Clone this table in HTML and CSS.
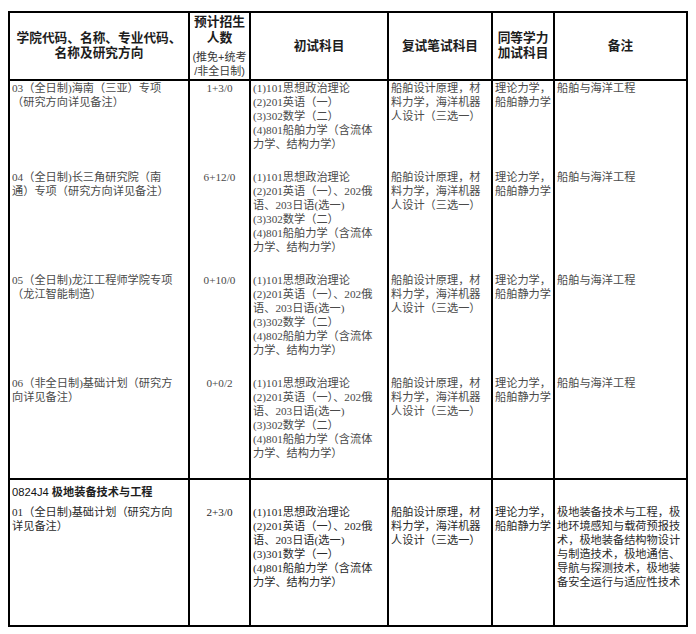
FILE: index.html
```html
<!DOCTYPE html>
<html lang="zh-CN">
<head>
<meta charset="utf-8">
<title>招生专业目录</title>
<link rel="stylesheet" href="styles.css">
</head>
<body>
<div class="tbl">
  <div class="c h"><div class="hl">学院代码、名称、专业代码、<br>名称及研究方向</div></div>
  <div class="c h h2"><div class="big">预计招生<br>人数</div><div class="small">(推免+统考<br>/非全日制)</div></div>
  <div class="c h"><div class="hl">初试科目</div></div>
  <div class="c h"><div class="hl">复试笔试科目</div></div>
  <div class="c h"><div class="hl">同等学力<br>加试科目</div></div>
  <div class="c h"><div class="hl">备注</div></div>

  <div class="c d">03（全日制)海南（三亚）专项<br>（研究方向详见备注）</div>
  <div class="c d n">1+3/0</div>
  <div class="c d">(1)101思想政治理论<br>(2)201英语（一）<br>(3)302数学（二）<br>(4)801船舶力学（含流体<br>力学、结构力学）</div>
  <div class="c d">船舶设计原理，材<br>料力学，海洋机器<br>人设计（三选一）</div>
  <div class="c d">理论力学，<br>船舶静力学</div>
  <div class="c d">船舶与海洋工程</div>

  <div class="c d">04（全日制)长三角研究院（南<br>通）专项（研究方向详见备注）</div>
  <div class="c d n">6+12/0</div>
  <div class="c d">(1)101思想政治理论<br>(2)201英语（一）、202俄<br>语、203日语(选一)<br>(3)302数学（二）<br>(4)801船舶力学（含流体<br>力学、结构力学）</div>
  <div class="c d">船舶设计原理，材<br>料力学，海洋机器<br>人设计（三选一）</div>
  <div class="c d">理论力学，<br>船舶静力学</div>
  <div class="c d">船舶与海洋工程</div>

  <div class="c d">05（全日制)龙江工程师学院专项<br>（龙江智能制造）</div>
  <div class="c d n">0+10/0</div>
  <div class="c d">(1)101思想政治理论<br>(2)201英语（一）、202俄<br>语、203日语(选一)<br>(3)302数学（二）<br>(4)802船舶力学（含流体<br>力学、结构力学）</div>
  <div class="c d">船舶设计原理，材<br>料力学，海洋机器<br>人设计（三选一）</div>
  <div class="c d">理论力学，<br>船舶静力学</div>
  <div class="c d">船舶与海洋工程</div>

  <div class="c d b">06（非全日制)基础计划（研究方<br>向详见备注）</div>
  <div class="c d n b">0+0/2</div>
  <div class="c d b">(1)101思想政治理论<br>(2)201英语（一）、202俄<br>语、203日语(选一)<br>(3)302数学（二）<br>(4)801船舶力学（含流体<br>力学、结构力学）</div>
  <div class="c d b">船舶设计原理，材<br>料力学，海洋机器<br>人设计（三选一）</div>
  <div class="c d b">理论力学，<br>船舶静力学</div>
  <div class="c d b">船舶与海洋工程</div>

  <div class="c major"><span class="code">0824J4</span> 极地装备技术与工程</div>
  <div class="c"></div>
  <div class="c"></div>
  <div class="c"></div>
  <div class="c"></div>
  <div class="c"></div>

  <div class="c d dk b">01（全日制)基础计划（研究方向<br>详见备注）</div>
  <div class="c d dk n b">2+3/0</div>
  <div class="c d dk b">(1)101思想政治理论<br>(2)201英语（一）、202俄<br>语、203日语(选一)<br>(3)301数学（一）<br>(4)801船舶力学（含流体<br>力学、结构力学）</div>
  <div class="c d dk b">船舶设计原理，材<br>料力学，海洋机器<br>人设计（三选一）</div>
  <div class="c d dk b">理论力学，<br>船舶静力学</div>
  <div class="c d dk b">极地装备技术与工程，极<br>地环境感知与载荷预报技<br>术，极地装备结构物设计<br>与制造技术，极地通信、<br>导航与探测技术，极地装<br>备安全运行与适应性技术</div>
</div>
</body>
</html>
```

FILE: styles.css
```css
html, body {
  margin: 0;
  padding: 0;
  background: #ffffff;
}

.tbl {
  display: grid;
  grid-template-columns: 180px 61px 138px 104px 62px 133px;
  grid-template-rows: 68px 89px 103px 103px 104px 25px 122px;
  width: max-content;
  margin: 11px 0 0 8px;
  border-left: 2px solid #000;
  border-top: 2px solid #000;
}

.c {
  box-sizing: border-box;
  border-right: 2px solid #000;
  min-width: 0;
  overflow: hidden;
}

.h {
  border-bottom: 2px solid #000;
  display: flex;
  flex-direction: column;
  align-items: center;
  justify-content: center;
  text-align: center;
  font-family: "Liberation Sans", "Noto Sans CJK SC", sans-serif;
  font-weight: 700;
  color: #1c1c1c;
}

.hl {
  font-size: 12.7px;
  line-height: 15px;
  white-space: nowrap;
}

.h2 {
  justify-content: flex-start;
  padding-top: 1px;
}

.big {
  font-size: 12.8px;
  line-height: 16px;
  white-space: nowrap;
}

.small {
  margin-top: 4px;
  font-size: 11px;
  line-height: 14px;
  font-weight: 400;
  color: #3a3a3a;
  white-space: nowrap;
}

.d {
  padding: 0 2px;
  font-family: "Liberation Serif", "Noto Sans CJK SC", serif;
  font-size: 11.2px;
  line-height: 14px;
  color: #4a4a4a;
  white-space: nowrap;
}

.dk {
  color: #2a2a2a;
}

.n {
  text-align: center;
}

.b {
  border-bottom: 2px solid #000;
}

.major {
  padding: 5px 2px 0;
  font-family: "Liberation Sans", "Noto Sans CJK SC", sans-serif;
  font-size: 11.2px;
  line-height: 14px;
  font-weight: 700;
  color: #1e1e1e;
  white-space: nowrap;
}

.code {
  font-weight: 400;
  color: #111111;
}
```
